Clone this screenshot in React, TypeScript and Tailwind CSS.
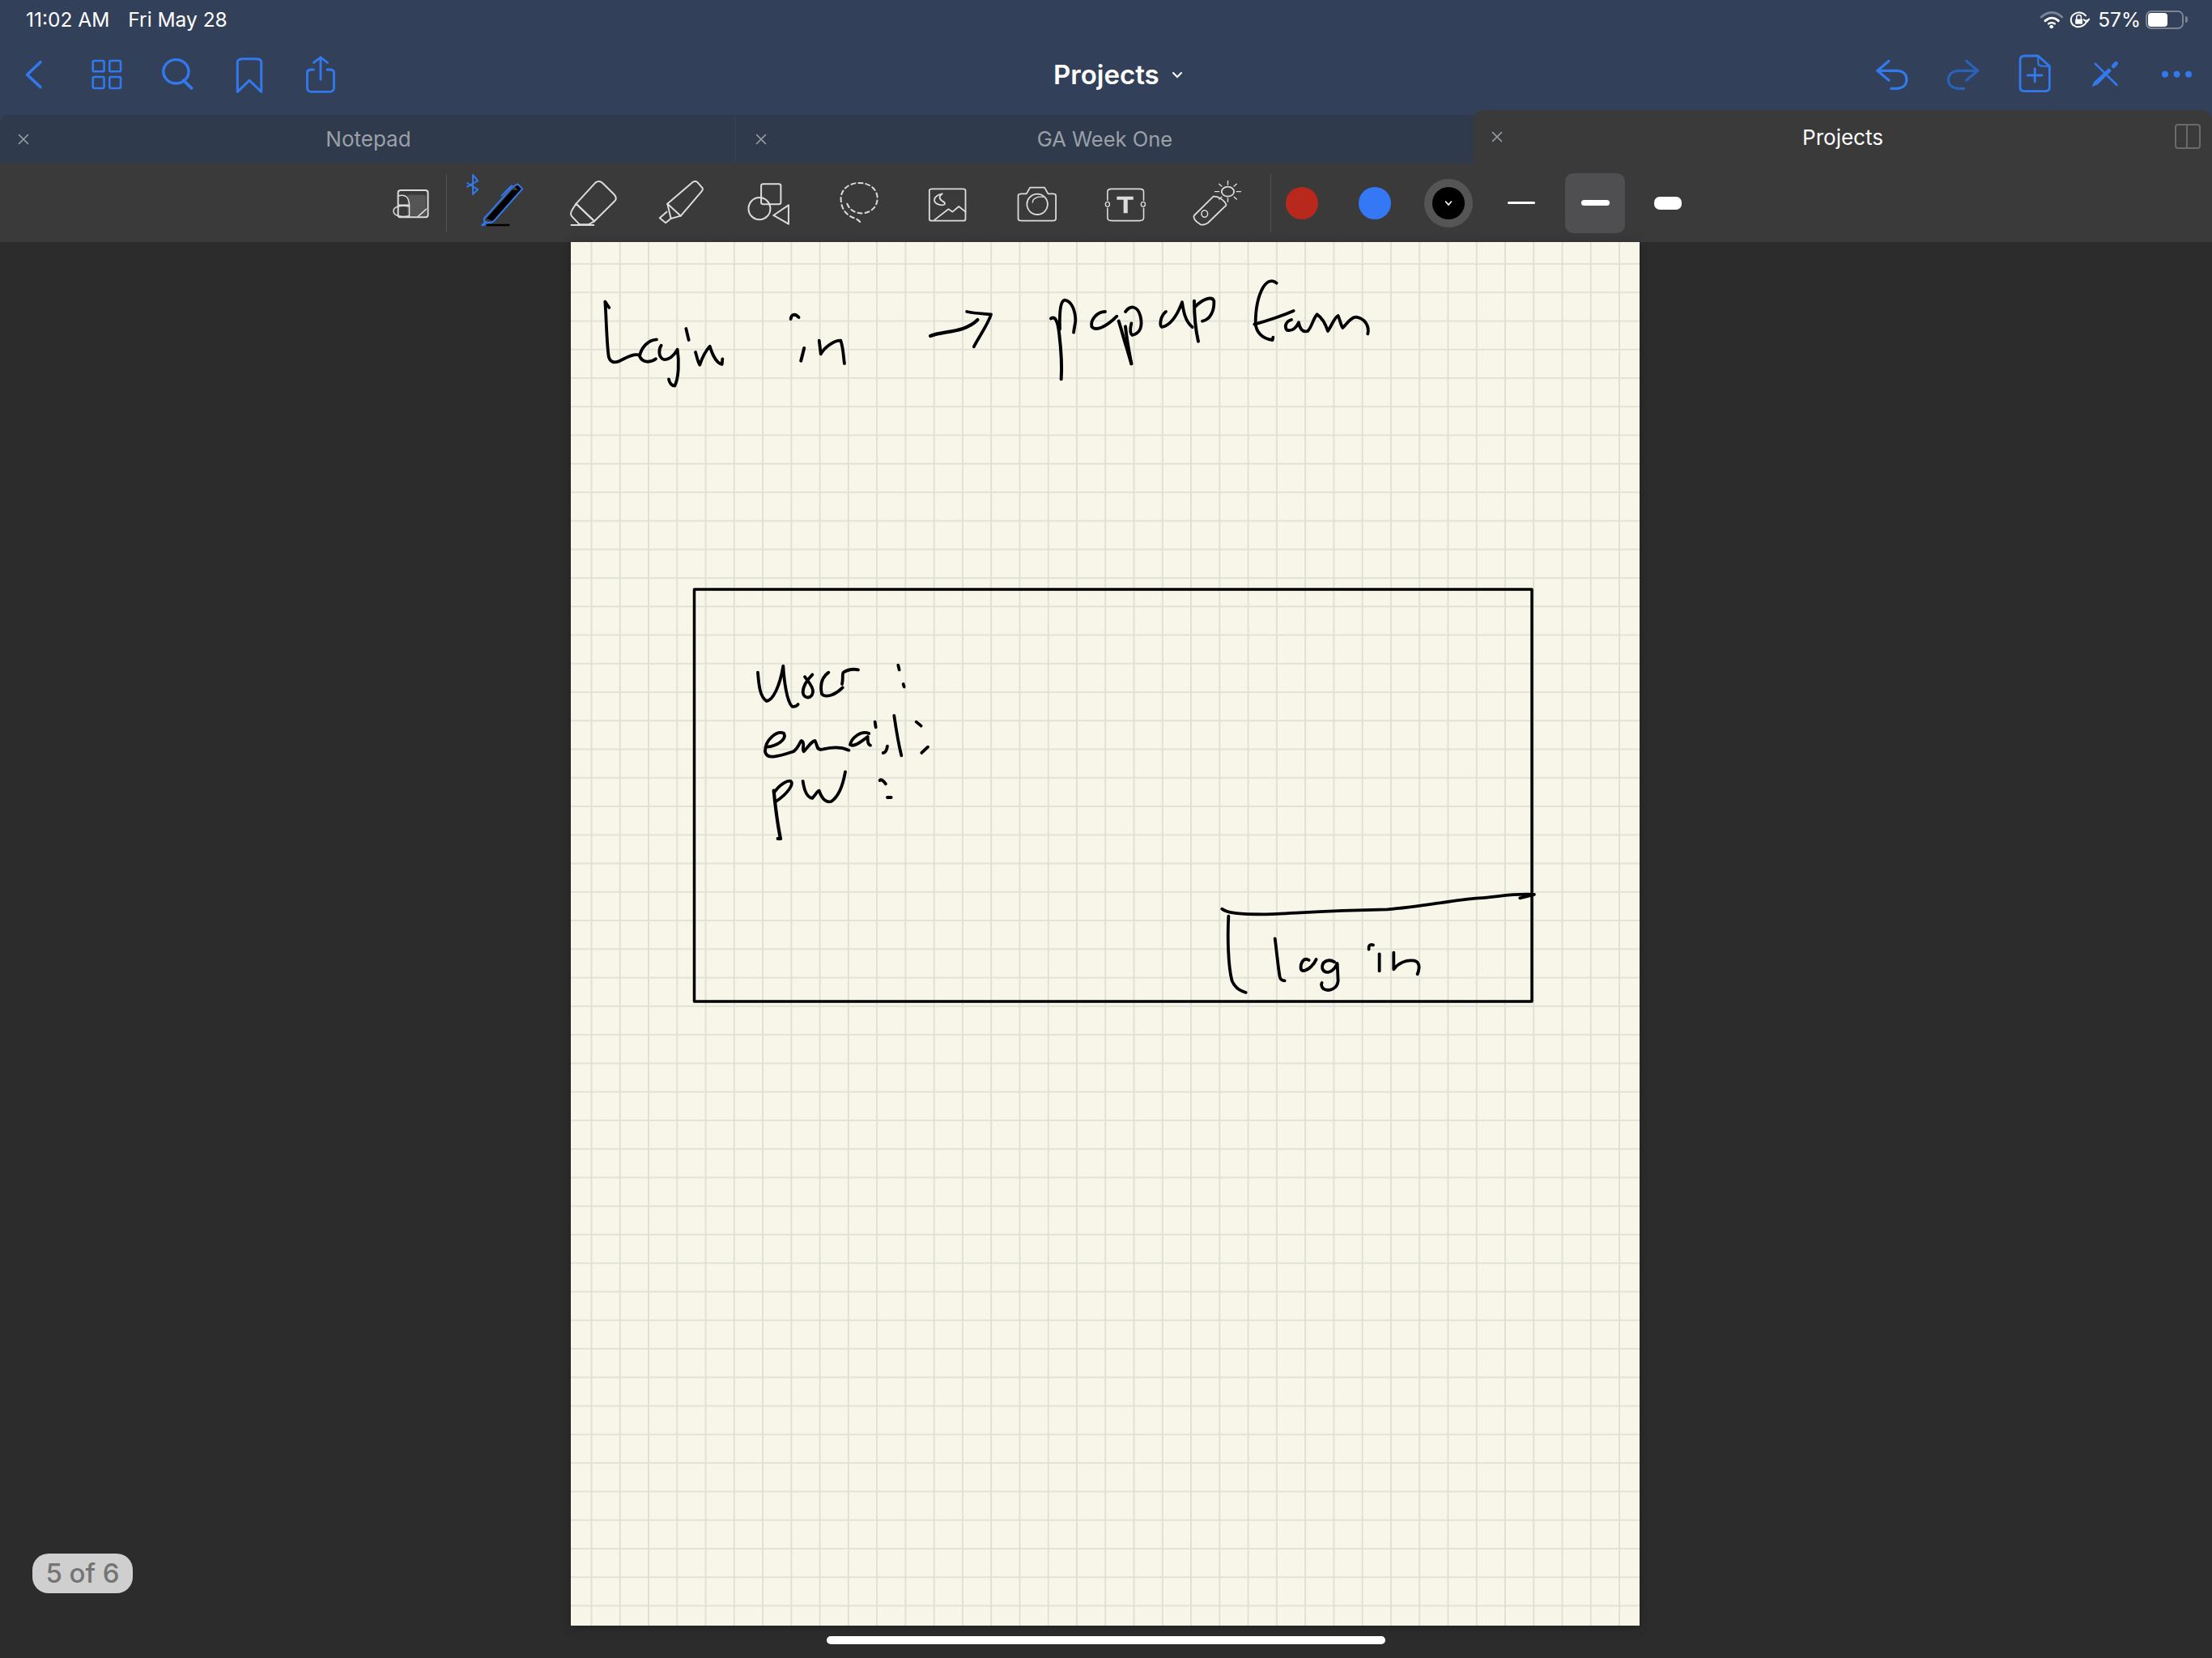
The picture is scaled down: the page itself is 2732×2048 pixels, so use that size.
import React from "react";

const BLUE = "#3279ee";

// path that keeps its stroke width when the group around it is stretched
function P({ d, w = 2, c, fill = "none", dash }: { d: string; w?: number; c?: string; fill?: string; dash?: string }) {
  return (
    <path
      d={d}
      fill={fill}
      stroke={c ?? "currentColor"}
      strokeWidth={w}
      strokeDasharray={dash}
      strokeLinecap="round"
      strokeLinejoin="round"
      vectorEffect="non-scaling-stroke"
    />
  );
}

// one pen stroke on the page
function Ink({ d, w = 3.8 }: { d: string; w?: number }) {
  return <P d={d} w={w} />;
}

function E({ cx, cy, rx, ry, w = 2, fill = "none", c, dash }: { cx: number; cy: number; rx: number; ry: number; w?: number; fill?: string; c?: string; dash?: string }) {
  return (
    <ellipse
      cx={cx}
      cy={cy}
      rx={rx}
      ry={ry}
      fill={fill}
      stroke={c ?? "currentColor"}
      strokeWidth={w}
      strokeDasharray={dash}
      vectorEffect="non-scaling-stroke"
    />
  );
}

// an icon cell in a row, x / w / y / h are the cell's place on the screen
function Slot({ x, w, y, h, children, className }: { x: number; w: number; y: number; h: number; children: React.ReactNode; className?: string }) {
  return (
    <svg width={w} height={h} viewBox={`${x} ${y} ${w} ${h}`} className={`shrink-0 ${className ?? ""}`}>
      {children}
    </svg>
  );
}

const NAV_L = "scale(0.4464 0.3333)";
const NAV_R = "translate(2100 0) scale(0.4031 0.3333)";
const TOOL_A = "translate(460 190) scale(0.4337 0.3333)";
const TOOL_B = "translate(1100 190) scale(0.6378 0.3333)";

function StatusBar() {
  return (
    <div className="flex h-[46px] items-center text-[24.5px] leading-none text-white">
      <span className="ml-[32px]">11:02 AM</span>
      <span className="ml-[23px]">Fri May 28</span>
      <div className="ml-auto flex items-center pr-[30px]">
        <Slot x={2518} w={37} y={0} h={46}>
          <g transform={NAV_R}>
            <P d="M1050 60 C1070 38 1095 38 1113 60" w={3} c="#7c8494" />
            <P d="M1062 74 C1075 60 1090 60 1102 74" w={3} c="#fff" />
            <P d="M1072 85 C1078 80 1085 80 1091 85" w={2.5} c="#fff" />
            <E cx={1081} cy={96} rx={5} ry={5} w={1} fill="#fff" c="#fff" />
          </g>
        </Slot>
        <Slot x={2555} w={30} y={0} h={46}>
          <g transform={NAV_R}>
            <P d="M1186 55 C1175 40 1160 42 1152 48 C1135 60 1138 88 1155 95 C1170 100 1185 92 1190 72" w={2} c="#fff" />
            <P d="M1180 70 L1190 78 L1196 68" w={2} c="#fff" />
            <rect x={1154} y={68} width={22} height={18} fill="#fff" />
            <P d="M1158 68 V60 C1158 50 1172 50 1172 60 V68" w={1.5} c="#fff" />
          </g>
        </Slot>
        <span className="ml-[8px]">57%</span>
        <div className="ml-[6px] h-[23px] w-[47px] rounded-[7px] border-2 border-[#7c8494] p-px">
          <div className="h-full w-[24px] rounded-[4px] bg-white" />
        </div>
        <div className="ml-[2px] h-[8px] w-[3px] rounded-r-full bg-[#7c8494]" />
      </div>
    </div>
  );
}

function NavBar() {
  return (
    <div className="flex h-[96px] items-center pb-[4px] text-[#3279ee]">
      <div className="flex w-[1301px]">
        <Slot x={0} w={90} y={46} h={92}>
          <g transform={NAV_L}><P d="M112 230 L75 277 L112 323" w={3.5} /></g>
        </Slot>
        <Slot x={90} w={85} y={46} h={92}>
          <g transform={NAV_L}>
            <P w={2.6} d="M262 225 H283 Q288 225 288 230 V260 Q288 265 283 265 H262 Q257 265 257 260 V230 Q257 225 262 225 Z" />
            <P w={2.6} d="M308 225 H329 Q334 225 334 230 V260 Q334 265 329 265 H308 Q303 265 303 260 V230 Q303 225 308 225 Z" />
            <P w={2.6} d="M262 285 H283 Q288 285 288 290 V322 Q288 327 283 327 H262 Q257 327 257 322 V290 Q257 285 262 285 Z" />
            <P w={2.6} d="M308 285 H329 Q334 285 334 290 V322 Q334 327 329 327 H308 Q303 327 303 322 V290 Q303 285 308 285 Z" />
          </g>
        </Slot>
        <Slot x={175} w={87} y={46} h={92}>
          <g transform={NAV_L}>
            <E cx={487} cy={265} rx={35} ry={44} w={3.4} />
            <P d="M508 298 L530 327" w={3.8} />
          </g>
        </Slot>
        <Slot x={262} w={90} y={46} h={92}>
          <g transform={NAV_L}>
            <P d="M657 340 V230 C657 222 665 218 672 218 H708 C716 218 723 222 723 230 V340 L690 298 Z" w={3} />
          </g>
        </Slot>
        <Slot x={352} w={90} y={46} h={92}>
          <g transform={NAV_L}>
            <P d="M868 258 H862 C854 258 850 262 850 270 V325 C850 335 855 340 862 340 H912 C920 340 924 335 924 325 V270 C924 262 920 258 912 258 H905" w={2.8} />
            <P d="M887 295 V213" w={2.8} />
            <P d="M868 232 L887 213 L906 232" w={2.8} />
          </g>
        </Slot>
      </div>
      <span className="text-[33px] font-semibold leading-none text-white">Projects</span>
      <svg width="14" height="10" viewBox="0 0 14 10" className="ml-[15px] mt-[2px]">
        <path d="M2 2 L7 7 L12 2" fill="none" stroke="#fff" strokeWidth="2" strokeLinecap="round" />
      </svg>
      <div className="ml-auto flex">
        <Slot x={2290} w={90} y={46} h={92}>
          <g transform={NAV_R}>
            <P d="M578 226 L543 262 L578 298" w={3.2} />
            <P d="M543 262 H600 C625 262 632 280 632 295 C632 315 620 328 600 328 H585" w={3.2} />
          </g>
        </Slot>
        <Slot x={2380} w={90} y={46} h={92}>
          <g transform={NAV_R}>
            <P d="M815 226 L850 262 L815 298" w={3.2} c="#2a62b8" />
            <P d="M850 262 H795 C770 262 760 280 760 295 C760 315 772 328 795 328 H808" w={3.2} c="#2a62b8" />
          </g>
        </Slot>
        <Slot x={2470} w={90} y={46} h={92}>
          <g transform={NAV_R}>
            <P d="M1035 207 H995 C985 207 980 213 980 222 V325 C980 333 985 338 995 338 H1055 C1065 338 1070 333 1070 325 V245 L1035 207 Z" w={2.8} />
            <P d="M1035 207 V232 C1035 240 1040 245 1048 245 H1070" w={2} />
            <P d="M1025 255 V303 M1003 279 H1047" w={2.8} />
          </g>
        </Slot>
        <Slot x={2560} w={90} y={46} h={92}>
          <g transform={NAV_R}>
            <P d="M1210 236 L1276 315" w={2.6} />
            <P d="M1274 235 L1266 245" w={5} />
            <path d="M1252 252 L1260 262 L1218 313 L1200 322 L1206 304 Z" fill="currentColor" />
          </g>
        </Slot>
        <Slot x={2650} w={82} y={46} h={92}>
          <g transform={NAV_R}>
            <E cx={1424} cy={275} rx={9} ry={11} w={1} fill="currentColor" />
            <E cx={1460} cy={275} rx={9} ry={11} w={1} fill="currentColor" />
            <E cx={1496} cy={275} rx={9} ry={11} w={1} fill="currentColor" />
          </g>
        </Slot>
      </div>
    </div>
  );
}

function CloseX({ left }: { left: string }) {
  return (
    <svg width="14" height="14" viewBox="0 0 14 14" className={`absolute top-1/2 -translate-y-1/2 ${left}`}>
      <path d="M1.5 1.5 L12.5 12.5 M12.5 1.5 L1.5 12.5" stroke="#9ba0a8" strokeWidth="1.6" strokeLinecap="round" />
    </svg>
  );
}

function TabBar() {
  return (
    <div className="flex h-[60px] items-end bg-[#334059] text-[26px] leading-none">
      <div className="relative flex h-[60px] w-[908px] items-center justify-center rounded-tl-[10px] bg-[#2f3a4c] pl-[2px] text-[#9ba0a8]">
        <CloseX left="left-[22px]" />
        Notepad
      </div>
      <div className="relative flex h-[60px] w-[912px] items-center justify-center border-l border-[#334059] bg-[#2f3a4c] text-[#9ba0a8]">
        <CloseX left="left-[24px]" />
        <span className="text-[25.5px]">GA Week One</span>
      </div>
      <div className="relative flex h-[66px] w-[912px] items-center justify-center rounded-t-[12px] bg-[#3a3a3a] pt-[2px] text-white">
        <CloseX left="left-[22px]" />
        Projects
        <div className="absolute right-[14px] top-[17px] flex h-[31px] w-[32px] rounded-[4px] border-2 border-[#6a6a6a]">
          <div className="w-1/2 border-r-2 border-[#6a6a6a]" />
        </div>
      </div>
    </div>
  );
}

function ToolBar() {
  return (
    <div className="flex h-[97px] items-center bg-[#3a3a3a] pl-[475px] text-[#dcdcdc]">
      <Slot x={475} w={76} y={214} h={74}>
        <g transform={TOOL_A}>
          <path d="M100 152 H145 Q152 152 152 160 V230 H100 Z" fill="#555" />
          <P d="M81 135 H150 Q158 135 158 143 V227 Q158 235 150 235 H81 Q73 235 73 227 V143 Q73 135 81 135 Z" w={2} />
          <P d="M75 155 C100 148 105 170 105 195 L105 232" w={1.5} />
          <P d="M105 195 C80 190 60 195 60 212 C60 232 85 235 105 230" w={1.5} />
          <P d="M75 190 H105" w={1.5} />
          <P d="M130 232 L153 205" w={1.5} />
        </g>
      </Slot>
      <div className="h-[72px] w-px bg-[#525252]" />
      <Slot x={552} w={128} y={214} h={74}>
        <g transform={TOOL_A}>
          <P d="M270 108 L300 132 L286 150 V78 L300 100 L270 122" w={2} c={BLUE} />
          <path d="M325 240 L398 134 L420 136 L345 250 Z" fill="#000" />
          <path d="M404 118 L414 114 L426 130 L418 140 Z" fill="#000" />
          <P d="M318 240 L395 128 L405 118 L414 112 L427 130 L345 250 C335 258 315 258 318 240 Z" w={2} c={BLUE} />
          <P d="M368 155 L396 118" w={2} c={BLUE} />
          <P d="M322 252 L312 265 L326 261" w={2} c={BLUE} />
          <P d="M326 264 H388" w={2.5} c="#000" />
        </g>
      </Slot>
      <Slot x={680} w={110} y={214} h={74}>
        <g transform={TOOL_A}>
          <P d="M580 185 L635 107 C642 100 650 102 655 108 L688 150 C695 160 695 168 690 175 L632 250 Z" />
          <P d="M580 185 L632 250 L615 262 H590 L568 232 C563 225 565 215 570 205 Z" />
          <P d="M566 264 H630" />
        </g>
      </Slot>
      <Slot x={790} w={110} y={214} h={74}>
        <g transform={TOOL_A}>
          <P d="M840 185 L912 105 C918 100 922 102 926 106 L940 127 C942 132 940 135 937 140 L878 230 L850 240 Z" />
          <P d="M840 185 L878 230" />
          <P d="M838 215 L818 238 L835 256 L850 240" />
        </g>
      </Slot>
      <Slot x={900} w={110} y={214} h={74}>
        <g transform={TOOL_A}>
          <P d="M1113 112 H1157 Q1163 112 1163 118 V181 Q1163 187 1157 187 H1113 Q1107 187 1107 181 V118 Q1107 112 1113 112 Z" />
          <E cx={1102} cy={203} rx={31} ry={41} />
          <P d="M1185 190 L1142 228 L1185 260 Z" />
        </g>
      </Slot>
      <Slot x={1010} w={110} y={214} h={74}>
        <g transform={TOOL_A}>
          <P d="M1352 185 C1358 208 1376 222 1398 220 C1425 216 1438 190 1438 165 C1438 130 1415 108 1386 108 C1355 108 1334 135 1334 165 C1334 205 1350 228 1372 238 C1385 245 1390 252 1392 262" dash="5 4" />
        </g>
      </Slot>
      <Slot x={1120} w={110} y={214} h={74}>
        <g transform={TOOL_B}>
          <P d="M80 130 H140 Q145 130 145 136 V242 Q145 248 140 248 H80 Q75 248 75 242 V136 Q75 130 80 130 Z" w={1.8} />
          <P d="M100 148 C82 155 78 185 98 190 C108 190 106 180 100 175 C92 165 95 155 100 148 Z" w={1.8} />
          <P d="M85 245 L112 205 L120 215 L132 195 L145 215" w={1.8} />
        </g>
      </Slot>
      <Slot x={1230} w={110} y={214} h={74}>
        <g transform={TOOL_B}>
          <P d="M247 155 Q247 148 254 148 H263 L270 125 H298 L305 148 H314 Q320 148 320 155 V240 Q320 248 314 248 H253 Q247 248 247 240 Z" w={1.8} />
          <E cx={284} cy={187} rx={20} ry={38} w={1.8} />
          <P d="M275 180 C275 165 285 157 295 160" w={1.4} />
        </g>
      </Slot>
      <Slot x={1340} w={110} y={214} h={74}>
        <g transform={TOOL_B}>
          <P d="M420 172 V140 Q420 130 428 130 H482 Q490 130 490 140 V172" w={1.6} />
          <P d="M420 202 V238 Q420 248 428 248 H482 Q490 248 490 238 V202" w={1.6} />
          <E cx={420} cy={187} rx={4} ry={9} w={1.4} />
          <E cx={489} cy={187} rx={4} ry={9} w={1.4} />
          <path d="M438 158 H470 V170 H459 V220 H451 V170 H438 Z" fill="#dcdcdc" />
        </g>
      </Slot>
      <Slot x={1450} w={119} y={214} h={74}>
        <g transform={TOOL_B}>
          <P d="M625 158 L588 228 C585 238 590 250 600 262 C605 265 612 260 615 255 L650 190 C648 175 635 156 625 158 Z" w={1.8} />
          <E cx={608} cy={222} rx={6} ry={13} w={1.5} />
          <E cx={653} cy={140} rx={12} ry={18} w={1.8} />
          <P d="M653 100 V114 M653 164 V178 M628 140 H636 M670 140 H678 M636 112 L641 120 M670 112 L665 120 M636 168 L641 160 M670 168 L665 160" w={1.4} />
        </g>
      </Slot>
      <div className="h-[72px] w-px bg-[#525252]" />
      <div className="ml-[18px] h-[40px] w-[40px] rounded-full bg-[#b8281c]" />
      <div className="ml-[50px] h-[40px] w-[40px] rounded-full bg-[#3478f6]" />
      <div className="ml-[41px] flex h-[60px] w-[60px] items-center justify-center rounded-full bg-[#555555]">
        <div className="flex h-[40px] w-[40px] items-center justify-center rounded-full bg-black">
          <svg width="10" height="8" viewBox="0 0 10 8">
            <path d="M1.5 2 L5 6 L8.5 2" fill="none" stroke="#fff" strokeWidth="1.6" strokeLinecap="round" />
          </svg>
        </div>
      </div>
      <div className="ml-[43px] h-[3px] w-[34px] rounded-full bg-white" />
      <div className="ml-[37px] flex h-[74px] w-[74px] items-center justify-center rounded-[10px] bg-[#4f4f51]">
        <div className="h-[7px] w-[35px] rounded-full bg-white" />
      </div>
      <div className="ml-[36px] h-[16px] w-[34px] rounded-[7px] bg-white" />
    </div>
  );
}

// handwritten notes on the page, coordinates taken per block from the page
function Notes() {
  return (
    <svg viewBox="705 299 1320 1709" className="absolute inset-0 h-full w-full text-black">
      <P d="M857.5 728 H1892 V1237 H857.5 Z" w={3.5} />

      <g transform="translate(735 360) scale(0.3333)">
        {/* Log'in */}
        <Ink d="M37 38 L52 60 M37 38 C42 100 42 180 50 240 C55 262 70 265 85 260 C110 250 135 230 160 235" />
        <Ink d="M228 178 C195 180 170 210 165 240 C175 265 205 265 225 250" />
        <Ink d="M245 200 C235 215 235 240 250 250 C270 260 295 235 305 215 C312 260 310 320 295 350 C285 350 275 340 273 325" />
        <Ink d="M337 138 L347 180" />
        <Ink d="M372 225 C378 245 382 265 388 272 C395 250 410 220 425 203 C432 225 445 265 470 270 L472 250" />
      </g>

      <g transform="translate(700 300) scale(0.6633 0.3333)">
        {/* in */}
        <Ink d="M417 282 C418 265 425 260 432 276" />
        <Ink d="M442 390 L436 437" w={4} />
        <Ink d="M470 362 L473 412 C480 385 500 360 510 362 C515 390 515 420 517 447" />
        {/* arrow */}
        <Ink d="M677 345 C700 325 740 335 765 285" w={4.2} />
        <Ink d="M745 255 C760 262 775 262 790 265 C785 300 770 340 758 385" />
      </g>

      <g transform="translate(1290 340) scale(0.3333)">
        {/* popup */}
        <Ink d="M24 160 C40 150 50 170 55 220 C62 280 65 340 62 385" w={4} />
        <Ink d="M57 200 C55 130 60 95 75 92 C100 95 115 130 115 170 L108 212" />
        <Ink d="M225 135 C195 135 170 165 175 190 C190 210 230 190 268 152" />
        <Ink d="M275 170 C285 200 295 240 305 270 L322 328" w={4} />
        <Ink d="M300 190 C305 240 315 290 322 328" w={4} />
        <Ink d="M300 135 C320 108 345 115 355 150 C365 190 355 215 325 222 C315 215 318 195 322 178" />
        <Ink d="M450 135 C430 150 425 185 435 192 C470 185 495 140 510 100 C515 130 520 170 548 192" />
        <Ink d="M555 95 C555 150 562 210 570 245" w={4} />
        <Ink d="M560 115 C585 90 620 75 628 95 C630 130 615 165 585 170" />
      </g>

      <g transform="translate(1530 335) scale(0.3333)">
        {/* form */}
        <Ink d="M140 44 C125 30 105 35 90 60 C70 95 62 150 62 195 C65 225 85 250 125 255 L127 245" />
        <Ink d="M58 197 C100 185 150 170 203 147" />
        <Ink d="M195 180 C175 185 168 205 178 218 C200 225 215 205 222 190 C225 210 235 228 255 222 C270 210 275 175 290 160 C305 170 320 190 330 222 C345 200 355 170 368 165 C375 180 378 200 385 210 C400 195 415 170 435 170 C465 175 485 200 478 232" />
      </g>

      <g transform="translate(840 780) scale(0.3333)">
        {/* user */}
        <Ink d="M288 152 C292 200 295 240 320 258 C345 255 370 200 382 128 C385 180 395 260 415 278 C425 280 435 275 437 270" />
        <Ink d="M462 168 C470 180 495 205 492 225 C488 250 458 252 455 225 C455 200 470 180 490 160" />
        <Ink d="M550 152 C525 170 518 200 525 232 C545 250 580 230 602 208" />
        <Ink d="M600 195 C605 175 600 155 605 152 C620 142 640 138 660 142" />
        <Ink d="M808 125 L812 142 M827 195 L830 205" />
        {/* email */}
        <Ink d="M320 428 C360 425 395 400 385 378 C360 365 315 400 315 445 C320 475 360 465 420 445" />
        <Ink d="M420 445 C440 430 445 405 450 405 C465 410 450 440 458 445 C480 420 490 405 500 405 C510 425 505 435 520 438 C560 430 590 425 625 440" />
        <Ink d="M700 378 C670 365 635 395 630 420 C645 430 675 405 695 390 C695 405 695 420 705 422" />
        <Ink d="M722 335 L725 355" />
        <Ink d="M752 450 C760 450 765 445 768 425" />
        <Ink d="M793 312 C800 360 810 420 820 460" />
        <Ink d="M875 335 L893 350 M895 450 L918 428" />
        {/* pw */}
        <Ink d="M347 590 C352 640 360 710 372 768 L362 768" w={4.2} />
        <Ink d="M350 595 C370 565 400 550 410 555 C422 565 400 600 355 630" />
        <Ink d="M455 555 C460 590 470 615 490 618 C505 600 510 590 515 590 C525 620 540 635 560 630 C590 610 605 560 612 520" />
        <Ink d="M740 552 C745 546 755 555 762 565 M768 615 L782 615" />
      </g>

      <g transform="translate(1460 1080) scale(0.3333)">
        {/* login button */}
        <Ink d="M148 128 C170 145 220 148 300 148 C400 146 500 135 760 130 C880 122 1000 95 1100 88 C1180 82 1230 70 1305 75 L1252 88" />
        <Ink d="M172 155 C168 230 170 340 185 395 C195 420 215 432 236 438" />
        <Ink d="M344 238 C350 280 355 340 362 380 C365 392 372 394 380 394" />
        <Ink d="M470 318 C450 305 438 330 440 350 C445 362 460 358 478 342 C490 330 495 320 497 315" />
        <Ink d="M565 325 C540 310 515 325 520 350 C530 372 560 365 575 330 L578 395 C575 425 545 435 525 425 C515 418 515 405 518 402" />
        <Ink d="M692 278 C690 265 695 258 708 262" />
        <Ink d="M731 295 L731 358" />
        <Ink d="M784 290 L784 352 C800 330 830 315 860 320 C880 325 882 345 872 370" />
      </g>
    </svg>
  );
}

export default function App() {
  return (
    <div className="relative flex h-[2048px] w-[2732px] flex-col overflow-hidden bg-[#2c2c2c] font-[Inter,sans-serif]">
      <div className="bg-[#334059]">
        <div className="pt-px">
          <StatusBar />
        </div>
        <div className="-mt-px">
          <NavBar />
        </div>
      </div>
      <TabBar />
      <ToolBar />
      <div className="flex-1 pl-[705px]">
        <div className="relative h-[1709px] w-[1320px] bg-[#f7f6e9] bg-[linear-gradient(to_right,#dfe1d4_1.5px,transparent_1.5px),linear-gradient(to_bottom,#e1e3d6_1.5px,transparent_1.5px)] bg-[size:35.27px_35.27px] bg-[position:24.5px_26px] shadow-[0_2px_12px_rgba(0,0,0,0.25)]">
          <Notes />
        </div>
      </div>

      <div className="absolute bottom-[80px] left-[40px] flex h-[49px] w-[124px] items-center justify-center rounded-[20px] bg-[#cfcfcf] text-[33px] font-medium leading-none text-[#737573]">
        5 of 6
      </div>
      <div className="absolute bottom-[17px] left-[1021px] h-[10px] w-[690px] rounded-full bg-white" />
    </div>
  );
}
